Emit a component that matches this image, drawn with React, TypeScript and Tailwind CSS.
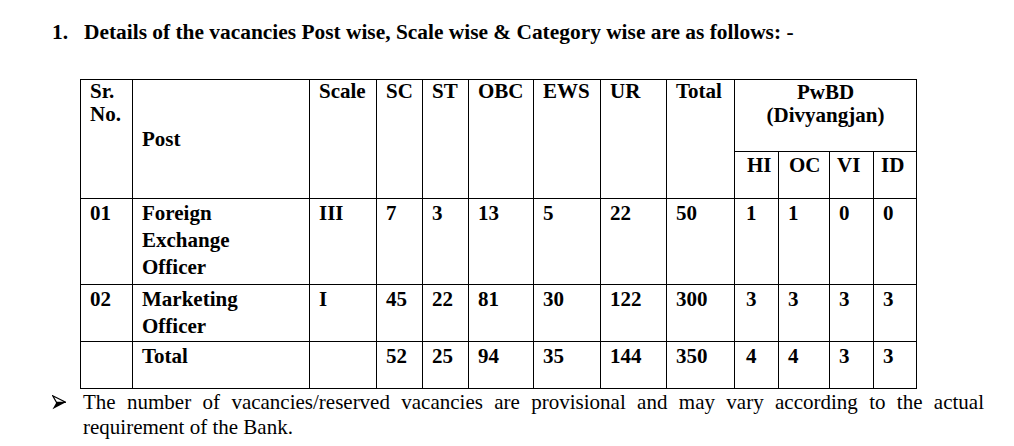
import React from 'react'

const rows = [
  { sr: '01', post: ['Foreign', 'Exchange', 'Officer'], scale: 'III', vals: ['7', '3', '13', '5', '22', '50'], pwbd: ['1', '1', '0', '0'], h: 'h-[86px]' },
  { sr: '02', post: ['Marketing', 'Officer'], scale: 'I', vals: ['45', '22', '81', '30', '122', '300'], pwbd: ['3', '3', '3', '3'], h: 'h-[57px]' },
  { sr: '', post: ['Total'], scale: '', vals: ['52', '25', '94', '35', '144', '350'], pwbd: ['4', '4', '3', '3'], h: 'h-[47px]' },
]

const cats = ['SC', 'ST', 'OBC', 'EWS', 'UR', 'Total']
const subs = ['HI', 'OC', 'VI', 'ID']

const cell = 'border border-black pl-[9px] pr-0'

function Bullet() {
  // 3D arrowhead bullet (➢)
  return (
    <svg width="15" height="15" viewBox="0 0 15 15" className="mt-[5px]">
      <polygon points="0.7,0.7 13.8,7.3 4.5,7.3" fill="white" stroke="black" strokeWidth="1.2" strokeLinejoin="miter" />
      <polygon points="4.5,7.3 13.8,7.3 0.5,14.3" fill="black" />
    </svg>
  )
}

export default function App() {
  return (
    <div className="w-[1014px] h-[446px] bg-white text-black overflow-hidden font-['Liberation_Serif','Times_New_Roman',serif]">
      <div className="flex pt-[20px] pl-[52px] text-[21.4px] leading-[24px] font-bold">
        <span className="w-[32px]">1.</span>
        <span>Details of the vacancies Post wise, Scale wise &amp; Category wise are as follows: -</span>
      </div>

      <table className="table-fixed border-collapse ml-[80px] mt-[35px] w-[836px] text-[21px] font-bold">
        <colgroup>
          <col className="w-[52px]" />
          <col className="w-[177px]" />
          <col className="w-[67px]" />
          <col className="w-[46px]" />
          <col className="w-[46px]" />
          <col className="w-[65px]" />
          <col className="w-[67px]" />
          <col className="w-[66px]" />
          <col className="w-[68px]" />
          <col className="w-[44px]" />
          <col className="w-[51px]" />
          <col className="w-[44px]" />
          <col className="w-[43px]" />
        </colgroup>
        <thead className="leading-[23px]">
          <tr className="h-[72px]">
            <th rowSpan={2} className={`${cell} align-top text-left font-bold`}>
              Sr.
              <br />
              No.
            </th>
            <th rowSpan={2} className={`${cell} align-middle text-left font-bold`}>
              Post
            </th>
            <th rowSpan={2} className={`${cell} align-top text-left font-bold`}>
              Scale
            </th>
            {cats.map((c) => (
              <th key={c} rowSpan={2} className={`${cell} align-top text-left font-bold`}>
                {c}
              </th>
            ))}
            <th colSpan={4} className="border border-black align-top text-center font-bold pt-[1px]">
              PwBD
              <br />
              (Divyangjan)
            </th>
          </tr>
          <tr className="h-[47px]">
            {subs.map((s, i) => (
              <th
                key={s}
                className={`border border-black align-top text-left font-bold pt-[2px] ${i === 0 ? 'pl-[12px]' : i === 1 ? 'pl-[10px]' : 'pl-[7px]'}`}
              >
                {s}
              </th>
            ))}
          </tr>
        </thead>
        <tbody className="leading-[27px]">
          {rows.map((r, idx) => (
            <tr key={idx} className={r.h}>
              <td className={`${cell} align-top pt-[1px]`}>{r.sr}</td>
              <td className={`${cell} align-top pt-[1px]`}>
                {r.post.map((p, i) => (
                  <div key={i}>{p}</div>
                ))}
              </td>
              <td className={`${cell} align-top pt-[1px]`}>{r.scale}</td>
              {r.vals.map((v, i) => (
                <td key={i} className={`${cell} align-top pt-[1px]`}>
                  {v}
                </td>
              ))}
              {r.pwbd.map((v, i) => (
                <td key={i} className={`${cell} align-top pt-[1px] ${i === 0 ? 'pl-[11px]' : ''}`}>
                  {v}
                </td>
              ))}
            </tr>
          ))}
        </tbody>
      </table>

      <div className="flex pl-[52px] pt-[1px] text-[21px] leading-[25px]">
        <div className="w-[31px] shrink-0">
          <Bullet />
        </div>
        <p className="w-[901px] text-justify">
          The number of vacancies/reserved vacancies are provisional and may vary according to the actual requirement of the Bank.
        </p>
      </div>
    </div>
  )
}
